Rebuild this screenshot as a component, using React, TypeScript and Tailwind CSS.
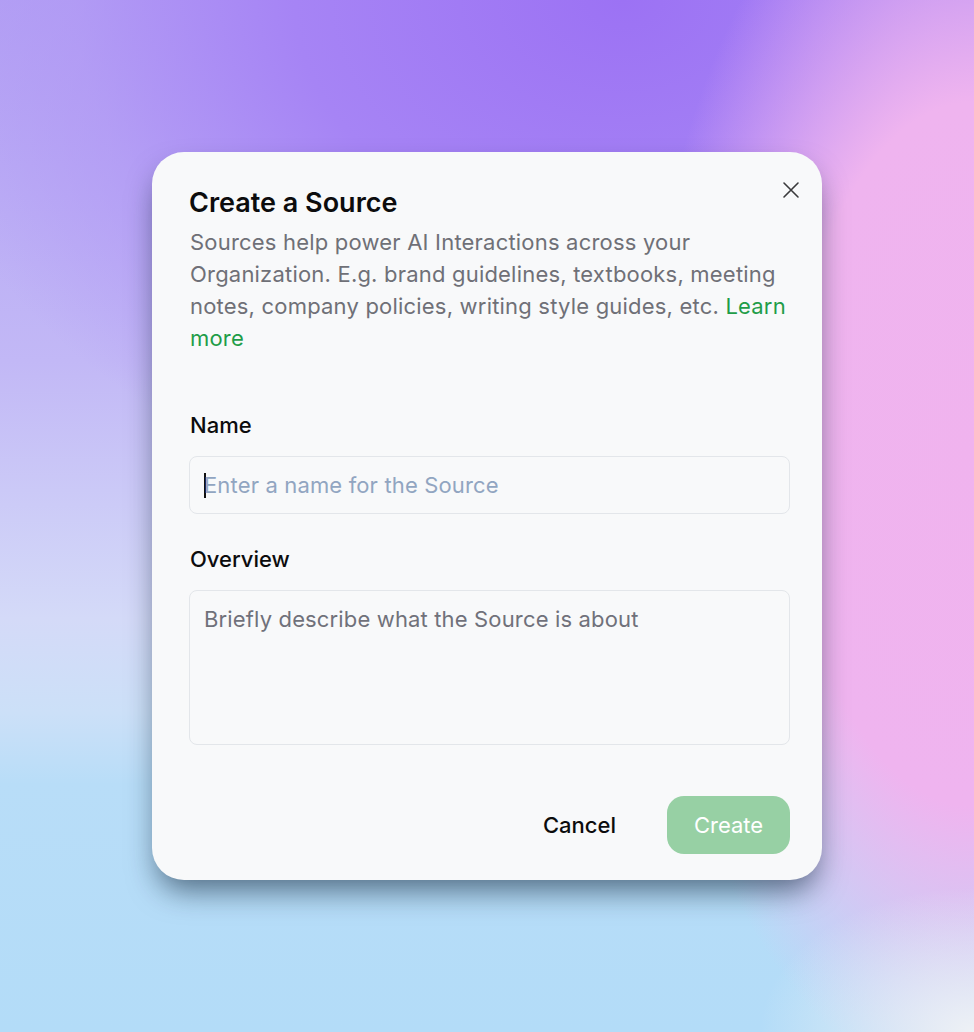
import React from "react";

export default function App() {
  return (
    <div
      className="w-[974px] h-[1032px] overflow-hidden flex items-start justify-center pt-[152px] font-['Inter',sans-serif] bg-[#b6ddf8] bg-[image:radial-gradient(ellipse_22%_14%_at_100%_100%,#eef1f5_0%,rgba(238,241,245,0)_100%),radial-gradient(ellipse_34%_62%_at_100%_44%,#f0b3ee_0%,#efb4ef_55%,rgba(239,180,239,0)_100%),radial-gradient(ellipse_75%_52%_at_64%_0%,#9c72f4_0%,#a684f5_45%,rgba(176,150,245,0.6)_75%,rgba(176,150,245,0)_100%),linear-gradient(180deg,#b3a2f4_0%,#c2b8f6_35%,#d4daf8_60%,#cce0f8_69%,#b8ddf8_76%,#b3dcf8_100%)]"
    >
      <div className="w-[670px] h-[728px] rounded-[32px] bg-[#f8f9fa] shadow-[0_16px_30px_-6px_rgba(10,30,50,0.6)] pl-[37px] pr-[32px] pt-[34px] flex flex-col">
        <div className="flex items-start justify-between">
          <h1 className="text-[27px] leading-[34px] font-semibold text-[#0c0c0d]">
            Create a Source
          </h1>
          <button className="mt-[-6px] mr-[-11px] w-[20px] h-[20px] flex items-center justify-center text-[#3a3a3c]">
            <svg width="18" height="18" viewBox="0 0 18 18" fill="none" stroke="currentColor" strokeWidth="1.6" strokeLinecap="round">
              <path d="M2 2L16 16M16 2L2 16" />
            </svg>
          </button>
        </div>
        <p className="mt-[6px] pl-[1px] text-[22px] leading-[32px] tracking-[0.2px] text-[#6f7077]">
          Sources help power AI Interactions across your Organization. E.g. brand guidelines, textbooks, meeting notes, company policies, writing style guides, etc.{" "}
          <span className="text-[#1f9d48]">Learn more</span>
        </p>

        <label className="mt-[57px] pl-[1px] text-[22px] leading-[28px] font-medium text-[#0c0c0d]">Name</label>
        <div className="mt-[17px] h-[58px] rounded-[8px] border border-[#e3e6ea] bg-[#f8f9fa] flex items-center pl-[14px]">
          <span className="w-[2px] h-[25px] bg-[#111] mr-[-2px]"></span>
          <span className="text-[22px] tracking-[0.15px] text-[#91a5c1]">Enter a name for the Source</span>
        </div>

        <label className="mt-[31px] pl-[1px] text-[22px] leading-[28px] font-medium text-[#0c0c0d]">Overview</label>
        <div className="mt-[17px] h-[155px] rounded-[8px] border border-[#e3e6ea] bg-[#f8f9fa] pl-[14px] pt-[14px]">
          <span className="text-[22px] leading-[28px] tracking-[0.15px] text-[#70717a]">Briefly describe what the Source is about</span>
        </div>

        <div className="mt-[51px] flex items-center justify-end gap-[51px]">
          <button className="text-[22px] font-medium text-[#0c0c0d]">Cancel</button>
          <button className="w-[123px] h-[58px] rounded-[17px] bg-[#97d0a4] text-[22px] text-white">Create</button>
        </div>
      </div>
    </div>
  );
}
